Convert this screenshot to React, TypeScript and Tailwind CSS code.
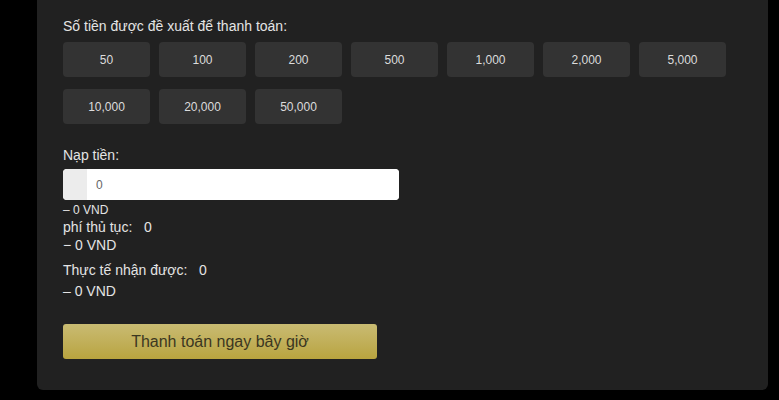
import React from 'react';

const amounts = ['50', '100', '200', '500', '1,000', '2,000', '5,000', '10,000', '20,000', '50,000'];

export default function App() {
  return (
    <div className="w-full h-[400px] bg-black overflow-hidden font-['Liberation_Sans',Arial,sans-serif]">
      <div className="ml-[37px] w-[731px] bg-[#212121] rounded-b-md px-[26px] pt-[16px] pb-[31px]">
        {/* Suggested amounts */}
        <p className="text-[14px] leading-[20px] text-[#e4e4e4]">Số tiền được đề xuất để thanh toán:</p>
        <div className="mt-[6px] flex flex-wrap gap-x-[9px] gap-y-[12px] w-[680px]">
          {amounts.map((a) => (
            <button
              key={a}
              className="w-[87px] h-[35px] rounded-[4px] bg-[#333333] text-[12px] text-[#dcdcdc]"
            >
              {a}
            </button>
          ))}
        </div>

        {/* Deposit */}
        <p className="mt-[21px] text-[14px] leading-[20px] text-[#e4e4e4]">Nạp tiền:</p>
        <div className="mt-[4px] flex w-[336px] h-[31px] rounded-[4px] overflow-hidden bg-white">
          <div className="w-[24px] bg-[#ececec]" />
          <input
            defaultValue="0"
            className="flex-1 px-[9px] text-[12px] text-[#666] outline-none bg-white"
          />
        </div>
        <p className="mt-[2px] text-[12px] leading-[16px] text-[#e4e4e4]">– 0 VND</p>

        <div className="text-[14px] leading-[18px] text-[#e4e4e4]">
          <p>phí thủ tục:&nbsp;&nbsp; 0</p>
          <p>− 0 VND</p>
          <p className="mt-[7px]">Thực tế nhận được:&nbsp;&nbsp; 0</p>
          <p className="mt-[3px]">– 0 VND</p>
        </div>

        <button className="mt-[24px] w-[314px] h-[35px] rounded-[3px] bg-gradient-to-b from-[#c9bb72] to-[#b9a43e] text-[16px] text-[#3b3721]">
          Thanh toán ngay bây giờ
        </button>
      </div>
    </div>
  );
}
